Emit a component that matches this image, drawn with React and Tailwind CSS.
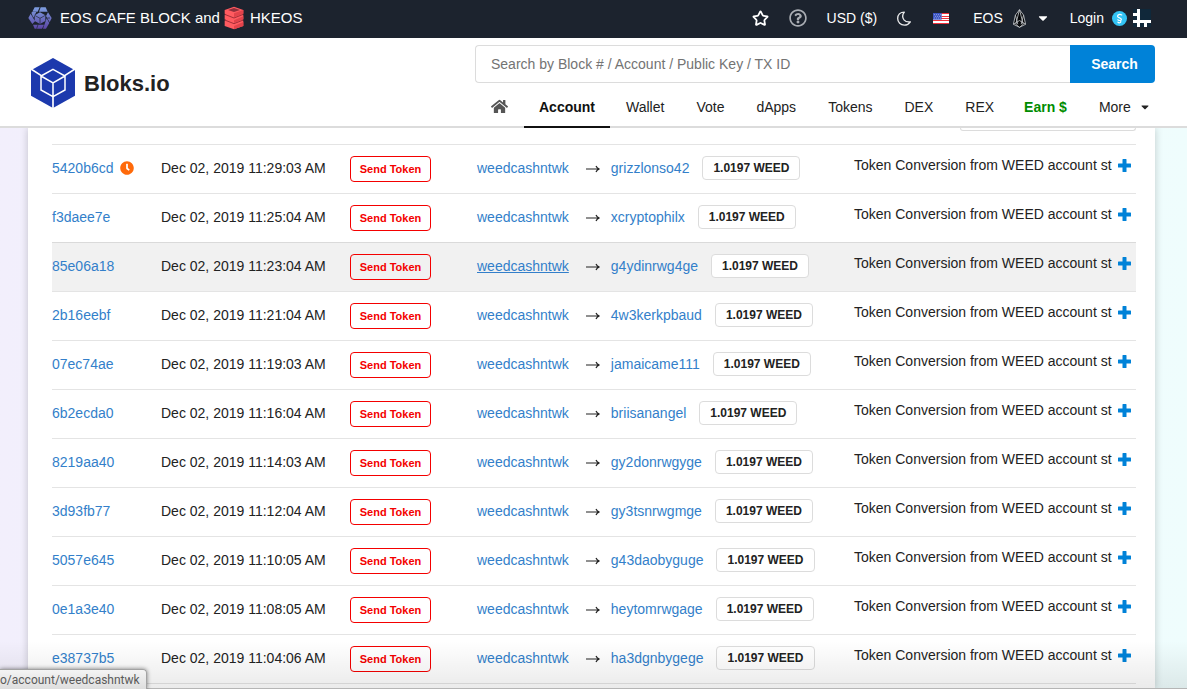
import React from 'react';
import { FaCaretDown, FaClock, FaHome, FaRegQuestionCircle } from 'react-icons/fa';
import { Star } from 'lucide-react';

const transactions = [
  { id: '5420b6cd', date: 'Dec 02, 2019 11:29:03 AM', to: 'grizzlonso42', pending: true },
  { id: 'f3daee7e', date: 'Dec 02, 2019 11:25:04 AM', to: 'xcryptophilx' },
  { id: '85e06a18', date: 'Dec 02, 2019 11:23:04 AM', to: 'g4ydinrwg4ge', active: true },
  { id: '2b16eebf', date: 'Dec 02, 2019 11:21:04 AM', to: '4w3kerkpbaud' },
  { id: '07ec74ae', date: 'Dec 02, 2019 11:19:03 AM', to: 'jamaicame111' },
  { id: '6b2ecda0', date: 'Dec 02, 2019 11:16:04 AM', to: 'briisanangel' },
  { id: '8219aa40', date: 'Dec 02, 2019 11:14:03 AM', to: 'gy2donrwgyge' },
  { id: '3d93fb77', date: 'Dec 02, 2019 11:12:04 AM', to: 'gy3tsnrwgmge' },
  { id: '5057e645', date: 'Dec 02, 2019 11:10:05 AM', to: 'g43daobyguge' },
  { id: '0e1a3e40', date: 'Dec 02, 2019 11:08:05 AM', to: 'heytomrwgage' },
  { id: 'e38737b5', date: 'Dec 02, 2019 11:04:06 AM', to: 'ha3dgnbygege' },
];

const navItems = ['Wallet', 'Vote', 'dApps', 'Tokens', 'DEX', 'REX'];

const CafeLogo = () => (
  <svg viewBox="0 0 72 66" className="h-[22px] w-6">
    <defs>
      <linearGradient id="cafe" x1="0" y1="0" x2="0" y2="1">
        <stop offset="0" stopColor="#7d9ee0" />
        <stop offset="1" stopColor="#5c46a6" />
      </linearGradient>
    </defs>
    <path
      fill="url(#cafe)"
      d="M20 1H35L29 14H13ZM38 1H53L59 14H33ZM60 16L71 33L65 46L54 27ZM64 48L54 65H45L56 34ZM42 65H20L15 53H48ZM13 51L1 33L8 20L21 43ZM10 17L13 15H25L16 32ZM36 16L52 25V42L36 51L20 42V25Z"
    />
    <path d="M36 34V51M36 34L20 25M36 34L52 25" stroke="#1c232e" strokeWidth="2" fill="none" />
    <path d="M30 53L26 65M66 33H58" stroke="#1c232e" strokeWidth="2" fill="none" />
  </svg>
);

const HkeosLogo = () => (
  <svg viewBox="0 0 60 70" className="h-6 w-5">
    <path fill="#ff5b60" d="M2 11L30 1L58 11V22L54 24L58 26V39L54 41L58 43V59L30 69L2 59V43L6 41L2 39V26L6 24L2 22Z" />
    <path fill="#8f2f3b" d="M12 11L30 5L48 11L30 17Z" />
    <path fill="#e2434b" d="M30 21L58 11V22L30 33ZM30 42L58 30V39L30 50ZM30 59L58 47V59L30 69Z" />
    <path d="M2 24L30 35L58 24M2 41L30 52L58 41" stroke="#a52f38" strokeWidth="3" fill="none" />
  </svg>
);

const BloksLogo = () => (
  <svg viewBox="0 0 132 150" className="h-[50px] w-11">
    <path fill="#1c39ad" d="M66 0L132 37V113L66 150L0 113V37Z" />
    <g fill="none" stroke="#fff" strokeWidth="5">
      <path d="M0 33L31 53M132 33L101 53M66 116V150" />
      <path strokeWidth="4.5" d="M66 34L102 54V96L66 116L30 96V54ZM30 54L66 75L102 54M66 75V116" />
    </g>
  </svg>
);

const MoonIcon = () => (
  <svg viewBox="0 0 42 44" className="h-[15px] w-3.5" fill="none" stroke="#e8e9ea" strokeWidth="4" strokeLinejoin="round">
    <path d="M22 3C9 3 2 12 2 22C2 33 11 42 22 42C30 42 36 38 40 32C33 33 25 31 21 26C16 19 16 10 22 3Z" />
  </svg>
);

const FlagIcon = () => (
  <svg viewBox="0 0 48 33" className="h-[11px] w-4">
    <path fill="#fff" d="M0 0H48V33H0Z" />
    <path stroke="#f0323c" strokeWidth="3" d="M0 1.5H48M0 10.5H48M0 16.5H48M0 22.5H48M0 31.5H48" />
    <path fill="#3b55c4" d="M0 0H26V20H0Z" />
    <path stroke="#fff" strokeWidth="2" strokeDasharray="2 4" d="M3 5H25M6 10H25M3 15H25" />
  </svg>
);

const EosIcon = () => (
  <svg viewBox="0 0 38 56" className="h-[19px] w-[13px]" fill="none" stroke="#c2c5c9" strokeWidth="2.5" strokeLinejoin="round">
    <path fill="#050608" d="M19 2L7 18L1 45L19 54L37 45L31 18Z" />
    <path d="M19 2L8 45L19 54L30 45ZM7 18L14 45M31 18L24 45M1 45L19 34L37 45" />
  </svg>
);

const ScatterIcon = () => (
  <svg viewBox="0 0 46 46" className="h-[15px] w-[15px]">
    <circle cx="23" cy="23" r="23" fill="#33c4f5" />
    <path d="M30 12C24 9 17 11 17 16C17 22 29 20 29 26C29 30 18 30 18 26M27 31C28 36 21 38 18 34" fill="none" stroke="#fff" strokeWidth="3.5" strokeLinecap="round" />
  </svg>
);

const LynxIcon = () => (
  <svg viewBox="0 0 54 54" className="h-[18px] w-[18px]">
    <path fill="#10283a" d="M0 0H54V54H0Z" />
    <path fill="#fff" d="M12 0H21V33H54V42H42V54H33V42H21V54H12V42H0V33H12V21H0V12H12Z" />
  </svg>
);

const ArrowIcon = () => (
  <svg viewBox="0 0 14 8" className="mt-0.5 mr-[11px] ml-[17px] h-2 w-3.5" fill="none" stroke="#222" strokeWidth="1.2">
    <path d="M0 4H13M10 1Q11 3.500 13.500 4Q11 4.500 10 7" />
  </svg>
);

const PlusIcon = () => (
  <svg viewBox="0 0 13 13" className="h-[13px] w-[13px]" fill="currentColor">
    <path d="M5 0H8Q8.500 0 8.500 .5V4.500H12.500Q13 4.500 13 5V8Q13 8.500 12.500 8.500H8.500V12.500Q8.500 13 8 13H5Q4.500 13 4.500 12.500V8.500H.5Q0 8.500 0 8V5Q0 4.500 .5 4.500H4.500V.5Q4.500 0 5 0Z" />
  </svg>
);

const TopBar = () => (
  <div className="flex h-[38px] shrink-0 items-center justify-between bg-[#1c232e] pr-9 pb-0.5 pl-7 text-white">
    <div className="flex items-center text-[15px]">
      <CafeLogo />
      <a href="#cafe" className="ml-2">EOS CAFE BLOCK</a>
      <span className="ml-1">and</span>
      <a href="#hkeos" className="ml-1 flex items-center gap-1.5">
        <HkeosLogo />
        HKEOS
      </a>
    </div>
    <div className="flex items-center text-sm">
      <button aria-label="Favorites"><Star size={17} strokeWidth={2.5} strokeLinejoin="miter" /></button>
      <button aria-label="Help" className="ml-5 text-[#a9adb3]"><FaRegQuestionCircle size={18} /></button>
      <button className="ml-5">USD ($)</button>
      <button aria-label="Dark mode" className="ml-5"><MoonIcon /></button>
      <button aria-label="Language" className="ml-[22px]"><FlagIcon /></button>
      <button className="ml-6 flex items-center">
        EOS
        <span className="mx-2.5"><EosIcon /></span>
        <FaCaretDown size={14} />
      </button>
      <button className="ml-5 flex items-center gap-1.5">
        Login
        <span className="ml-0.5"><ScatterIcon /></span>
        <LynxIcon />
      </button>
    </div>
  </div>
);

const Header = () => (
  <header className="relative z-10 flex shrink-0 justify-between border-b-2 border-[#dcdcdc] bg-white pr-8 pl-[31px]">
    <a href="#home" className="flex items-center gap-[9px] pt-0.5 text-[22px] font-bold text-[#222]">
      <BloksLogo />
      Bloks.io
    </a>
    <div className="w-[680px] pt-[7px]">
      <form className="flex h-[38px]">
        <input
          type="text"
          aria-label="Search"
          placeholder="Search by Block # / Account / Public Key / TX ID"
          className="min-w-0 flex-1 rounded-l border border-r-0 border-[#dcdcdc] px-[15px] text-sm outline-none placeholder:text-[#737373]"
        />
        <button type="button" className="w-[85px] rounded-r bg-[#0082d8] pl-1 text-sm font-bold text-white">Search</button>
      </form>
      <nav className="-mb-0.5 flex h-[45px] items-stretch text-sm text-[#222]">
        <a href="#home" aria-label="Home" className="flex items-center px-4 pt-0.5 text-[#555]"><FaHome size={17} /></a>
        <a href="#account" className="flex items-center border-b-2 border-[#111] px-[15px] pt-1 font-bold text-[#111]">Account</a>
        {navItems.map((item) => (
          <a key={item} href={`#${item}`} className="flex items-center px-4 pt-0.5">{item}</a>
        ))}
        <a href="#earn" className="flex items-center pt-0.5 pr-4 pl-3.5 font-bold text-[#008c00]">Earn $</a>
        <button className="flex items-center gap-2 pt-0.5 pl-4">
          More
          <FaCaretDown size={12} />
        </button>
      </nav>
    </div>
  </header>
);

const TransactionRow = ({ tx }) => (
  <tr className={tx.active ? 'h-[49px] border-t border-[#dadada] bg-[#f1f1f1]' : 'h-[49px] border-t border-[#e4e4e4]'}>
    <td className="pb-0.5">
      <div className="flex items-center gap-1.5">
        <a href={`#${tx.id}`} className="text-[#337fca]">{tx.id}</a>
        {tx.pending && <FaClock size={14} className="text-[#ff6a0a]" />}
      </div>
    </td>
    <td className="pb-0.5">{tx.date}</td>
    <td>
      <button className="h-[26px] w-[81px] rounded border border-[#f40000] pt-0.5 text-[11px] font-bold text-[#f40000]">Send Token</button>
    </td>
    <td className="pb-0.5">
      <div className="flex items-center">
        <a href="#weedcashntwk" className={tx.active ? 'text-[#337fca] underline' : 'text-[#337fca]'}>weedcashntwk</a>
        <ArrowIcon />
        <a href={`#${tx.to}`} className="text-[#337fca]">{tx.to}</a>
        <span className="ml-[13px] rounded border border-[#dcdcdc] bg-white px-2.5 text-xs leading-[22px] font-bold">1.0197 WEED</span>
      </div>
    </td>
    <td className="pb-2">
      <div className="flex items-center gap-1.5">
        <span>Token Conversion from WEED account st</span>
        <button aria-label="Show memo" className="text-[#0082d8]"><PlusIcon /></button>
      </div>
    </td>
  </tr>
);

export default function App() {
  return (
    <div className="relative flex h-screen flex-col overflow-hidden bg-linear-to-r from-[#f2effc] to-[#effdfd] font-['Liberation_Sans',Arial,sans-serif] text-[#222]">
      <TopBar />
      <Header />
      <main className="mr-8 ml-7 min-h-0 flex-1 overflow-hidden bg-white pr-[19px] pl-6 shadow-[0_0_8px_rgba(0,0,0,0.2)]">
        <div className="flex justify-end">
          <div className="h-[3px] w-44 rounded-b border-x border-b border-[#dcdcdc]" />
        </div>
        <table className="mt-[13px] w-full table-fixed border-b border-[#e4e4e4] text-sm whitespace-nowrap">
          <colgroup>
            <col className="w-[109px]" />
            <col className="w-[189px]" />
            <col className="w-[127px]" />
            <col />
            <col className="w-[282px]" />
          </colgroup>
          <tbody>
            {transactions.map((tx) => (
              <TransactionRow key={tx.id} tx={tx} />
            ))}
          </tbody>
        </table>
      </main>
      <div className="pointer-events-none absolute inset-x-0 bottom-0 h-12 border-b border-[#b5b5b5] bg-linear-to-b from-transparent to-black/8" />
      <div className="absolute bottom-0 left-0 h-5 rounded-tr border-t border-r border-[#a3a3a3] bg-linear-to-b from-[#f4f4f4] to-[#dedede] pr-1.5 font-['Roboto',sans-serif] text-xs leading-5 text-[#5a5a5a] shadow-[0_0_4px_rgba(0,0,0,0.5)]">
        o/account/weedcashntwk
      </div>
    </div>
  );
}
